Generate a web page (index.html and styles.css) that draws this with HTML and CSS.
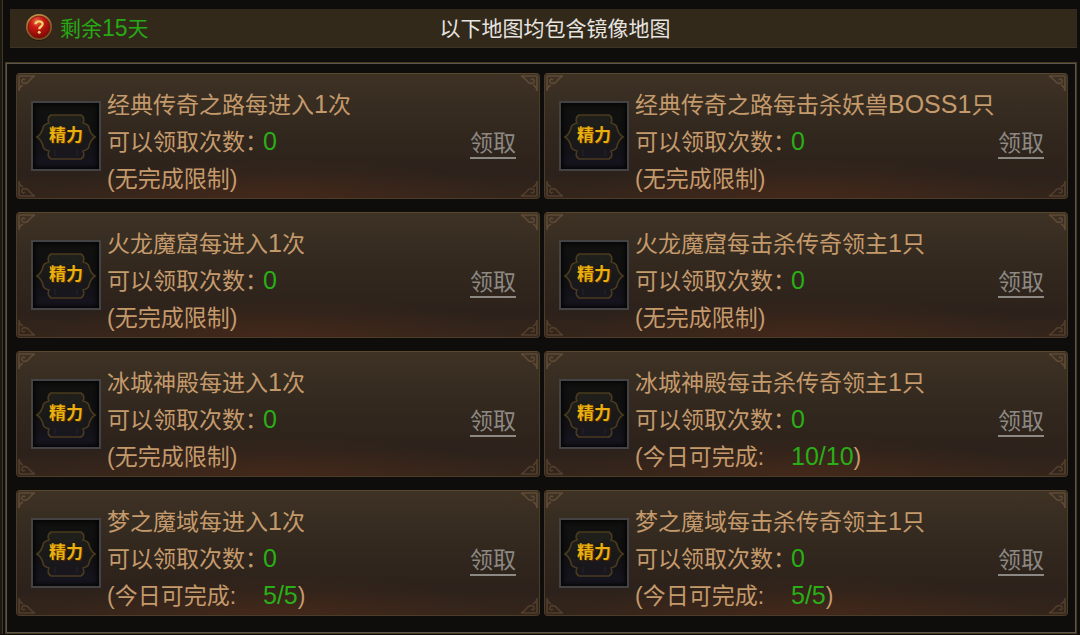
FILE: index.html
```html
<!DOCTYPE html>
<html lang="zh-CN">
<head>
  <meta charset="UTF-8">
  <meta name="viewport" content="width=device-width, initial-scale=1.0">
  <title>精力领取</title>
  <link rel="stylesheet" href="styles.css">
</head>
<body>

  <!-- Shared shapes: card corners and the energy badge -->
  <svg class="defs" width="0" height="0" aria-hidden="true">
    <defs>
      <linearGradient id="badgeBg" x1="0" y1="0" x2="0" y2="1">
        <stop offset="0" stop-color="#20201b"/>
        <stop offset="0.5" stop-color="#1a1918"/>
        <stop offset="1" stop-color="#18161f"/>
      </linearGradient>
      <g id="curl">
        <path d="M2 2H18C15 3 14 5 12 7C10 10 6 10 5 8C4 6 6 4 8 6"/>
        <path d="M2 2V17C2 14 4 12 6 11"/>
      </g>
      <symbol id="corners" overflow="visible">
        <use href="#curl"/>
        <svg x="100%" overflow="visible"><use href="#curl" transform="scale(-1 1)"/></svg>
        <svg y="100%" overflow="visible"><use href="#curl" transform="scale(1 -1)" opacity="0.7"/></svg>
        <svg x="100%" y="100%" overflow="visible"><use href="#curl" transform="scale(-1 -1)" opacity="0.7"/></svg>
      </symbol>
      <symbol id="badge" viewBox="0 0 64 64">
        <path d="M3 33C6 31 8 28 9 24C9 21 11 20 15 19C13 15 14 13 17 11H47C50 13 51 15 49 19C53 20 55 21 55 24C56 28 58 31 61 33C58 35 56 38 55 42C55 45 53 46 49 47C51 51 50 53 47 55H17C14 53 13 51 15 47C11 46 9 45 9 42C8 38 6 35 3 33Z" fill="url(#badgeBg)" stroke="#4a3a1e" stroke-width="1.6"/>
        <path d="M22 16L30 22L32 19L34 22L42 16M21 52V46M43 52V46" fill="none" stroke="#262420"/>
      </symbol>
    </defs>
  </svg>

  <div class="panel">
    <!-- Header bar -->
    <header class="header">
      <div class="remain">
        <svg class="help" viewBox="0 0 28 28" role="img" aria-label="帮助">
          <defs>
            <radialGradient id="red" cx="0.4" cy="0.25" r="0.8">
              <stop offset="0" stop-color="#ea6a52"/>
              <stop offset="0.35" stop-color="#cc1a13"/>
              <stop offset="1" stop-color="#780705"/>
            </radialGradient>
            <linearGradient id="gold" x1="0" y1="0" x2="0.3" y2="1">
              <stop offset="0" stop-color="#d0a14a"/>
              <stop offset="0.5" stop-color="#9c6530"/>
              <stop offset="1" stop-color="#7b4d26"/>
            </linearGradient>
          </defs>
          <circle cx="14" cy="15" r="13" fill="#1a130a" opacity="0.6"/>
          <circle cx="14" cy="14" r="13" fill="url(#gold)"/>
          <circle cx="14" cy="14" r="11" fill="url(#red)" stroke="#5a1a0c" stroke-width="0.6"/>
          <path d="M10.5 11.3C10.6 7.4 17.6 7.4 17.6 11C17.6 13.5 14.3 13.4 14.2 16.2" fill="none" stroke="#eed36c" stroke-width="2.4"/>
          <circle cx="14.2" cy="19.3" r="1.5" fill="#eed36c"/>
        </svg>
        <span>剩余<span class="latin">15</span>天</span>
      </div>
      <h1 class="title">以下地图均包含镜像地图</h1>
    </header>

    <!-- Task list -->
    <main class="frame">
      <article class="card">
        <svg class="corners" aria-hidden="true"><use href="#corners"/></svg>
        <div class="icon"><svg aria-hidden="true"><use href="#badge"/></svg><span>精力</span></div>
        <div class="info">
          <h2>经典传奇之路每进入<span class="latin">1</span>次</h2>
          <p><span class="label">可以领取次数<span class="colon">：</span></span><span class="latin num">0</span></p>
          <p>(无完成限制)</p>
        </div>
        <a class="claim" href="#">领取</a>
      </article>

      <article class="card">
        <svg class="corners" aria-hidden="true"><use href="#corners"/></svg>
        <div class="icon"><svg aria-hidden="true"><use href="#badge"/></svg><span>精力</span></div>
        <div class="info">
          <h2>经典传奇之路每击杀妖兽<span class="latin">BOSS1</span>只</h2>
          <p><span class="label">可以领取次数<span class="colon">：</span></span><span class="latin num">0</span></p>
          <p>(无完成限制)</p>
        </div>
        <a class="claim" href="#">领取</a>
      </article>

      <article class="card">
        <svg class="corners" aria-hidden="true"><use href="#corners"/></svg>
        <div class="icon"><svg aria-hidden="true"><use href="#badge"/></svg><span>精力</span></div>
        <div class="info">
          <h2>火龙魔窟每进入<span class="latin">1</span>次</h2>
          <p><span class="label">可以领取次数<span class="colon">：</span></span><span class="latin num">0</span></p>
          <p>(无完成限制)</p>
        </div>
        <a class="claim" href="#">领取</a>
      </article>

      <article class="card">
        <svg class="corners" aria-hidden="true"><use href="#corners"/></svg>
        <div class="icon"><svg aria-hidden="true"><use href="#badge"/></svg><span>精力</span></div>
        <div class="info">
          <h2>火龙魔窟每击杀传奇领主<span class="latin">1</span>只</h2>
          <p><span class="label">可以领取次数<span class="colon">：</span></span><span class="latin num">0</span></p>
          <p>(无完成限制)</p>
        </div>
        <a class="claim" href="#">领取</a>
      </article>

      <article class="card">
        <svg class="corners" aria-hidden="true"><use href="#corners"/></svg>
        <div class="icon"><svg aria-hidden="true"><use href="#badge"/></svg><span>精力</span></div>
        <div class="info">
          <h2>冰城神殿每进入<span class="latin">1</span>次</h2>
          <p><span class="label">可以领取次数<span class="colon">：</span></span><span class="latin num">0</span></p>
          <p>(无完成限制)</p>
        </div>
        <a class="claim" href="#">领取</a>
      </article>

      <article class="card">
        <svg class="corners" aria-hidden="true"><use href="#corners"/></svg>
        <div class="icon"><svg aria-hidden="true"><use href="#badge"/></svg><span>精力</span></div>
        <div class="info">
          <h2>冰城神殿每击杀传奇领主<span class="latin">1</span>只</h2>
          <p><span class="label">可以领取次数<span class="colon">：</span></span><span class="latin num">0</span></p>
          <p><span class="label">(今日可完成:</span><span class="latin num">10/10</span>)</p>
        </div>
        <a class="claim" href="#">领取</a>
      </article>

      <article class="card">
        <svg class="corners" aria-hidden="true"><use href="#corners"/></svg>
        <div class="icon"><svg aria-hidden="true"><use href="#badge"/></svg><span>精力</span></div>
        <div class="info">
          <h2>梦之魔域每进入<span class="latin">1</span>次</h2>
          <p><span class="label">可以领取次数<span class="colon">：</span></span><span class="latin num">0</span></p>
          <p><span class="label">(今日可完成:</span><span class="latin num">5/5</span>)</p>
        </div>
        <a class="claim" href="#">领取</a>
      </article>

      <article class="card">
        <svg class="corners" aria-hidden="true"><use href="#corners"/></svg>
        <div class="icon"><svg aria-hidden="true"><use href="#badge"/></svg><span>精力</span></div>
        <div class="info">
          <h2>梦之魔域每击杀传奇领主<span class="latin">1</span>只</h2>
          <p><span class="label">可以领取次数<span class="colon">：</span></span><span class="latin num">0</span></p>
          <p><span class="label">(今日可完成:</span><span class="latin num">5/5</span>)</p>
        </div>
        <a class="claim" href="#">领取</a>
      </article>
    </main>
  </div>

</body>
</html>
```
FILE: styles.css
```css
* {
  box-sizing: border-box;
}

body {
  margin: 0;
  background-color: #0f0d0b;
  color: #c49a6c;
  font-family: "Liberation Sans", "Noto Sans CJK SC", sans-serif;
  font-size: 23px;
}

h1, h2, p {
  margin: 0;
  font-size: inherit;
  font-weight: normal;
}

.defs {
  position: absolute;
}

/* Outer panel with the thin gold edge on the left */
.panel {
  border-left: 2px solid #1d190e;
  box-shadow: inset 1px 0 #3e382c;
  padding: 9px 3px 0 3px;
}

/* Header bar */
.header {
  display: grid;
  grid-template-columns: 1fr auto 1fr;
  align-items: center;
  height: 39px;
  margin-left: 5px;
  padding-bottom: 3px;
  background-color: #32291a;
  border-bottom: 1px solid #3a3424;
  font-size: 21px;
}

.header .latin {
  font-size: 23px;
}

.remain {
  display: flex;
  align-items: center;
  gap: 7px;
  padding-left: 15px;
  color: #27a916;
}

.help {
  width: 28px;
  height: 28px;
}

.title {
  padding-left: 23px;
  color: #e6e4e0;
}

/* Framed list of cards */
.frame {
  display: grid;
  grid-template-columns: 1fr 1fr;
  gap: 13px 4px;
  margin-top: 14px;
  padding: 10px 8px 17px 10px;
  border: 1px solid #473b1d;
  box-shadow: inset 0 0 0 1px #5c5650;
}

.card {
  position: relative;
  display: flex;
  align-items: center;
  padding: 0 23px 0 14px;
  min-height: 126px;
  border: 1px solid #4c3c2a;
  border-top-color: #58462f;
  border-radius: 4px;
  background:
    radial-gradient(ellipse 45% 32% at 50% 100%, rgba(82, 43, 25, 0.5), transparent),
    linear-gradient(#3d3224, #33281e 45%, #2c221b 80%, #35251b);
  line-height: 37px;
}

.corners {
  position: absolute;
  top: 0;
  left: 0;
  width: 100%;
  height: 100%;
  overflow: visible;
  fill: none;
  stroke: #5f4a35;
  stroke-width: 1.6;
  pointer-events: none;
}

/* Energy icon, its caption lies over the badge */
.icon {
  display: grid;
  place-items: center;
  flex: none;
  width: 70px;
  height: 70px;
  border: 2px solid #434346;
  background: linear-gradient(#111110, #100f10 50%, #171520);
  box-shadow: inset 0 0 4px 2px #050505;
}

.icon svg,
.icon span {
  grid-area: 1 / 1;
}

.icon svg {
  width: 64px;
  height: 64px;
}

.icon span {
  color: #e9b010;
  font-size: 17px;
  font-weight: bold;
  line-height: 20px;
  text-shadow: 1px 1px 1px #5c2e00;
}

.info {
  flex: 1;
  padding: 13px 0 0 6px;
  white-space: nowrap;
}

/* Latin letters and digits run a little larger than the Chinese text */
.latin {
  font-size: 25px;
  line-height: 1;
}

.label {
  display: inline-block;
  width: 156px;
}

.colon {
  font-family: "Noto Sans CJK SC", sans-serif;
  font-feature-settings: "halt";
  line-height: 1;
}

.num {
  color: #2aae17;
}

.claim {
  margin-top: 16px;
  border-bottom: 2px solid #8c8984;
  color: #8c8984;
  line-height: 27px;
  text-decoration: none;
}
```
